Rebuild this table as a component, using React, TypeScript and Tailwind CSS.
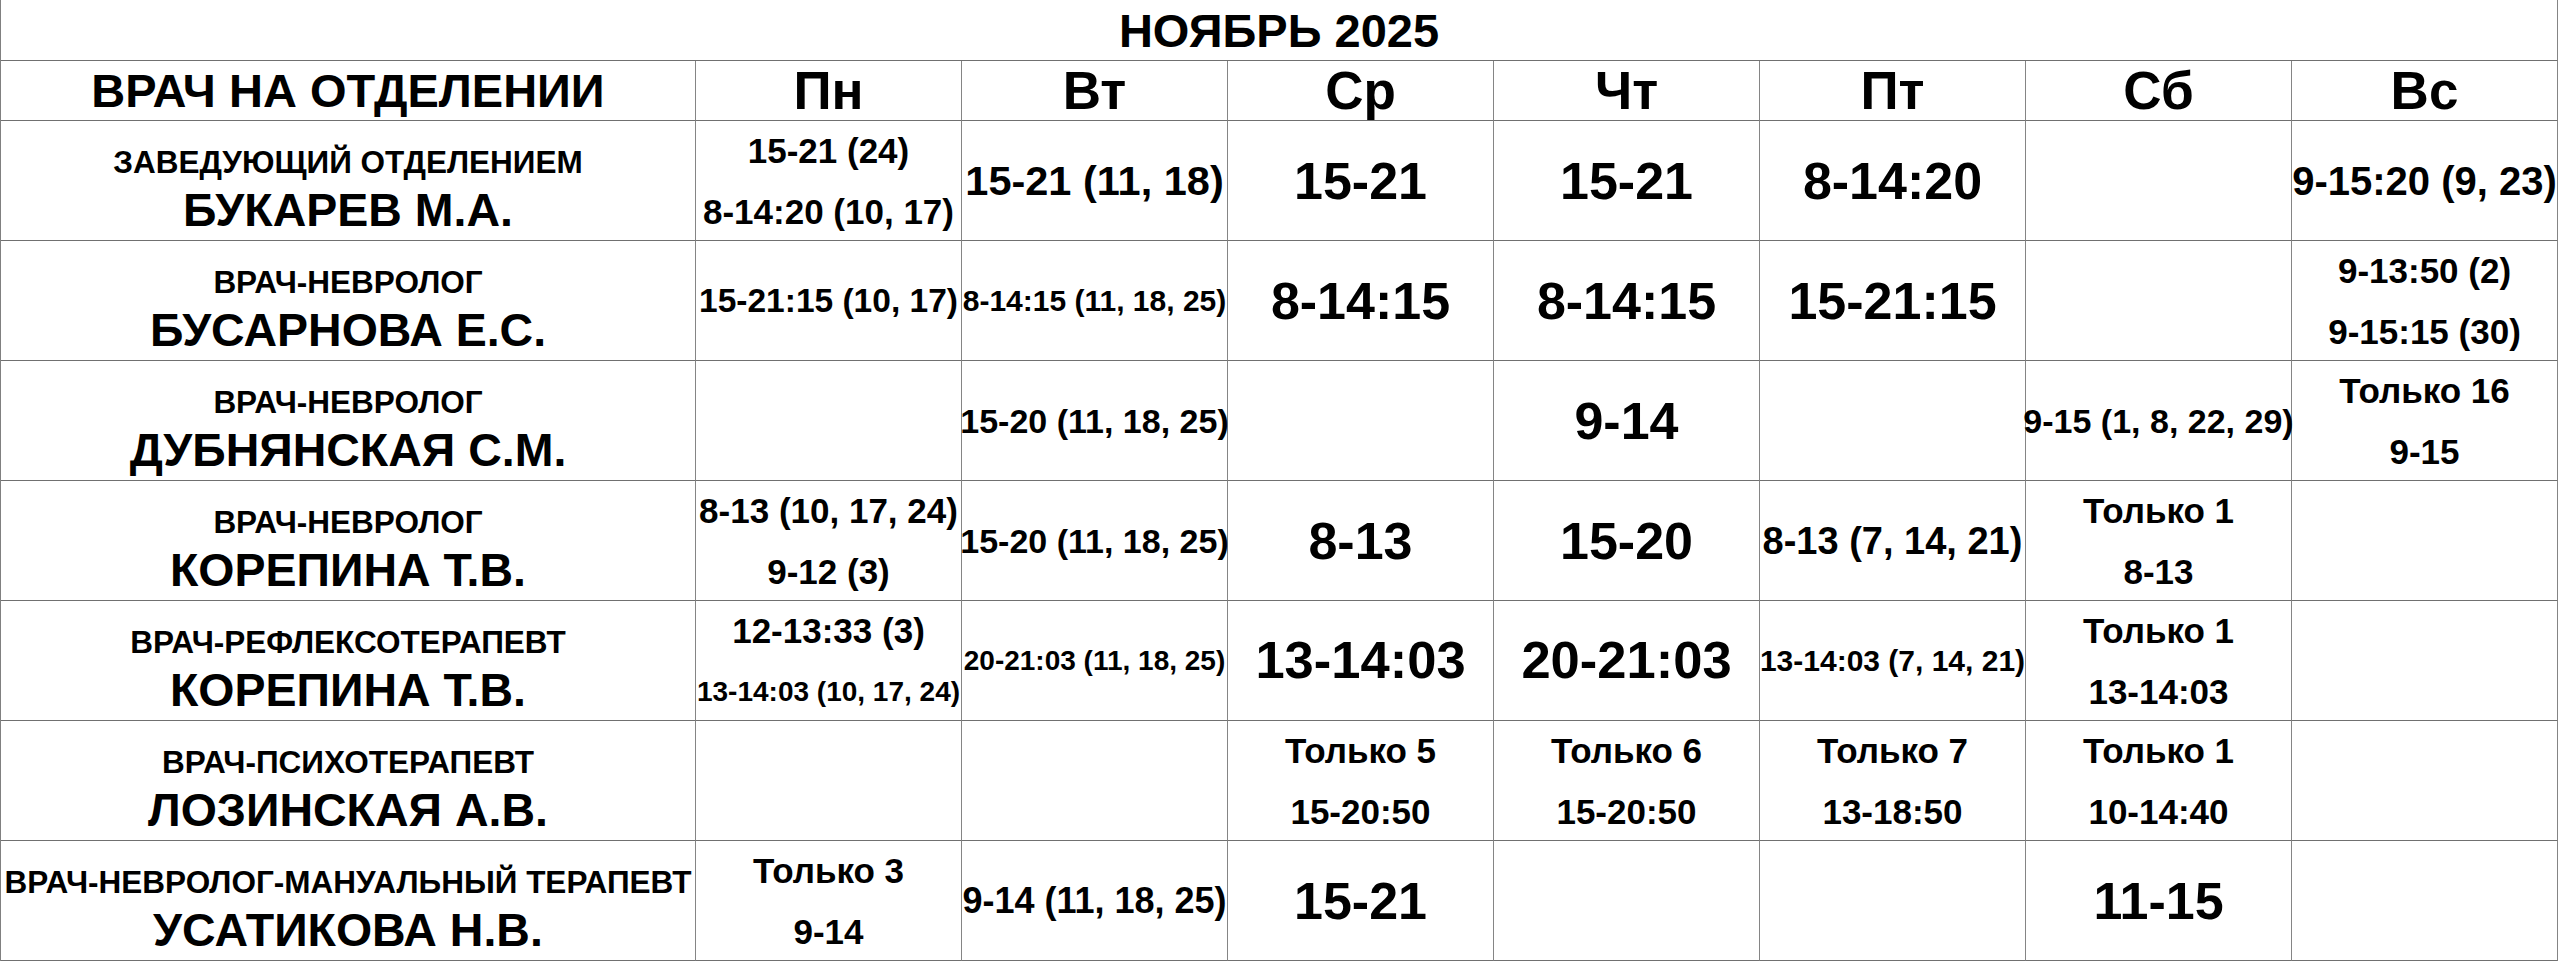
import React from "react";

type Line = { t: string; s: number };
type Cell = Line[] | null;

const SZ: Record<number, string> = {
  28: "text-[28px]",
  30: "text-[30px]",
  33: "text-[33.5px]",
  34: "text-[34px]",
  35: "text-[35px]",
  36: "text-[36px]",
  38: "text-[38px]",
  40: "text-[40px]",
  41: "text-[41.5px]",
  52: "text-[52px]",
  53: "text-[52.5px]",
};

const one = (t: string, s: number): Cell => [{ t, s }];
const two = (a: string, b: string, s = 35, s2?: number): Cell => [
  { t: a, s },
  { t: b, s: s2 ?? s },
];

const days = ["Пн", "Вт", "Ср", "Чт", "Пт", "Сб", "Вс"];

const rows: { role: string; name: string; cells: Cell[] }[] = [
  {
    role: "ЗАВЕДУЮЩИЙ ОТДЕЛЕНИЕМ",
    name: "БУКАРЕВ М.А.",
    cells: [
      two("15-21 (24)", "8-14:20 (10, 17)"),
      one("15-21 (11, 18)", 41),
      one("15-21", 52),
      one("15-21", 52),
      one("8-14:20", 52),
      null,
      one("9-15:20 (9, 23)", 40),
    ],
  },
  {
    role: "ВРАЧ-НЕВРОЛОГ",
    name: "БУСАРНОВА Е.С.",
    cells: [
      one("15-21:15 (10, 17)", 33),
      one("8-14:15 (11, 18, 25)", 30),
      one("8-14:15", 52),
      one("8-14:15", 52),
      one("15-21:15", 52),
      null,
      two("9-13:50 (2)", "9-15:15 (30)"),
    ],
  },
  {
    role: "ВРАЧ-НЕВРОЛОГ",
    name: "ДУБНЯНСКАЯ С.М.",
    cells: [
      null,
      one("15-20 (11, 18, 25)", 34),
      null,
      one("9-14", 52),
      null,
      one("9-15 (1, 8, 22, 29)", 34),
      two("Только 16", "9-15"),
    ],
  },
  {
    role: "ВРАЧ-НЕВРОЛОГ",
    name: "КОРЕПИНА Т.В.",
    cells: [
      two("8-13 (10, 17, 24)", "9-12 (3)"),
      one("15-20 (11, 18, 25)", 34),
      one("8-13", 52),
      one("15-20", 52),
      one("8-13 (7, 14, 21)", 38),
      two("Только 1", "8-13"),
      null,
    ],
  },
  {
    role: "ВРАЧ-РЕФЛЕКСОТЕРАПЕВТ",
    name: "КОРЕПИНА Т.В.",
    cells: [
      two("12-13:33 (3)", "13-14:03 (10, 17, 24)", 35, 28),
      one("20-21:03 (11, 18, 25)", 28),
      one("13-14:03", 53),
      one("20-21:03", 53),
      one("13-14:03 (7, 14, 21)", 30),
      two("Только 1", "13-14:03"),
      null,
    ],
  },
  {
    role: "ВРАЧ-ПСИХОТЕРАПЕВТ",
    name: "ЛОЗИНСКАЯ А.В.",
    cells: [
      null,
      null,
      two("Только 5", "15-20:50"),
      two("Только 6", "15-20:50"),
      two("Только 7", "13-18:50"),
      two("Только 1", "10-14:40"),
      null,
    ],
  },
  {
    role: "ВРАЧ-НЕВРОЛОГ-МАНУАЛЬНЫЙ ТЕРАПЕВТ",
    name: "УСАТИКОВА Н.В.",
    cells: [
      two("Только 3", "9-14"),
      one("9-14 (11, 18, 25)", 36),
      one("15-21", 52),
      null,
      null,
      one("11-15", 52),
      null,
    ],
  },
];

const cellB = "border-r border-b border-r-[#858585] border-b-[#707070]";

export default function App() {
  return (
    <div
      className="bg-white text-black font-bold"
      style={{ fontFamily: '"Liberation Sans", Arial, sans-serif' }}
    >
      <div className="w-[2557px] grid grid-cols-[695px_repeat(7,266px)] border-l border-[#808080]">
        <div
          className={`col-span-8 h-[61px] ${cellB} flex items-center justify-center text-[47px] leading-none`}
        >
          НОЯБРЬ 2025
        </div>
        <div
          className={`h-[60px] ${cellB} flex items-center justify-center text-[47px] leading-none`}
        >
          ВРАЧ НА ОТДЕЛЕНИИ
        </div>
        {days.map((d) => (
          <div
            key={d}
            className={`h-[60px] ${cellB} flex items-center justify-center text-[53px] leading-none`}
          >
            {d}
          </div>
        ))}
        {rows.map((r, ri) => (
          <React.Fragment key={ri}>
            <div
              className={`h-[120px] ${cellB} flex flex-col items-center justify-center pt-[14px] whitespace-nowrap`}
            >
              <div className="text-[31.5px] leading-[44px]">{r.role}</div>
              <div className="text-[46.5px] leading-[52px]">{r.name}</div>
            </div>
            {r.cells.map((c, ci) => (
              <div
                key={ci}
                className={`h-[120px] ${cellB} flex flex-col items-center justify-center whitespace-nowrap`}
              >
                {c &&
                  c.map((l, li) => (
                    <div
                      key={li}
                      className={`${SZ[l.s]} ${
                        c.length > 1 ? "leading-[61px]" : "leading-none"
                      }`}
                    >
                      {l.t}
                    </div>
                  ))}
              </div>
            ))}
          </React.Fragment>
        ))}
      </div>
    </div>
  );
}
